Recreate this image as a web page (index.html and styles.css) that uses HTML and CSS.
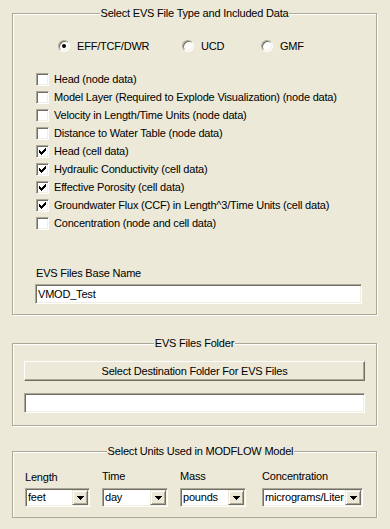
FILE: index.html
```html
<!DOCTYPE html>
<html lang="en">
<head>
    <meta charset="UTF-8">
    <meta name="viewport" content="width=device-width, initial-scale=1.0">
    <title>EVS Export</title>
    <link rel="stylesheet" href="styles.css">
</head>
<body>
    <!-- file type and data -->
    <fieldset class="group group-type">
        <legend>Select EVS File Type and Included Data</legend>
        <div class="radio-row">
            <label class="radio-opt"><span class="radio"><span class="dot"></span></span>EFF/TCF/DWR</label>
            <label class="radio-opt"><span class="radio"></span>UCD</label>
            <label class="radio-opt"><span class="radio"></span>GMF</label>
        </div>
        <ul class="check-list">
            <li><span class="check"></span>Head (node data)</li>
            <li><span class="check"></span>Model Layer (Required to Explode Visualization) (node data)</li>
            <li><span class="check"></span>Velocity in Length/Time Units (node data)</li>
            <li><span class="check"></span>Distance to Water Table (node data)</li>
            <li><span class="check"><svg class="tick" width="7" height="7" viewBox="0 0 7 7"><path d="M0 2h1v3H0zM1 3h1v3H1zM2 4h1v3H2zM3 3h1v3H3zM4 2h1v3H4zM5 1h1v3H5zM6 0h1v3H6z"/></svg></span>Head (cell data)</li>
            <li><span class="check"><svg class="tick" width="7" height="7" viewBox="0 0 7 7"><path d="M0 2h1v3H0zM1 3h1v3H1zM2 4h1v3H2zM3 3h1v3H3zM4 2h1v3H4zM5 1h1v3H5zM6 0h1v3H6z"/></svg></span>Hydraulic Conductivity (cell data)</li>
            <li><span class="check"><svg class="tick" width="7" height="7" viewBox="0 0 7 7"><path d="M0 2h1v3H0zM1 3h1v3H1zM2 4h1v3H2zM3 3h1v3H3zM4 2h1v3H4zM5 1h1v3H5zM6 0h1v3H6z"/></svg></span>Effective Porosity (cell data)</li>
            <li><span class="check"><svg class="tick" width="7" height="7" viewBox="0 0 7 7"><path d="M0 2h1v3H0zM1 3h1v3H1zM2 4h1v3H2zM3 3h1v3H3zM4 2h1v3H4zM5 1h1v3H5zM6 0h1v3H6z"/></svg></span>Groundwater Flux (CCF) in Length^3/Time Units (cell data)</li>
            <li><span class="check"></span>Concentration (node and cell data)</li>
        </ul>
        <div class="field-label">EVS Files Base Name</div>
        <div class="textbox base-name">VMOD_Test</div>
    </fieldset>

    <!-- output folder -->
    <fieldset class="group group-folder">
        <legend>EVS Files Folder</legend>
        <button class="btn">Select Destination Folder For EVS Files</button>
        <div class="textbox folder-path"></div>
    </fieldset>

    <!-- units -->
    <fieldset class="group group-units">
        <legend>Select Units Used in MODFLOW Model</legend>
        <div class="units-row">
            <div class="unit">
                <div class="unit-label low">Length</div>
                <div class="combo w-length"><span class="combo-value">feet</span><span class="combo-drop"><svg width="7" height="4" viewBox="0 0 7 4"><path d="M0 0h7v1H0zM1 1h5v1H1zM2 2h3v1H2zM3 3h1v1H3z"/></svg></span></div>
            </div>
            <div class="unit">
                <div class="unit-label">Time</div>
                <div class="combo w-time"><span class="combo-value">day</span><span class="combo-drop"><svg width="7" height="4" viewBox="0 0 7 4"><path d="M0 0h7v1H0zM1 1h5v1H1zM2 2h3v1H2zM3 3h1v1H3z"/></svg></span></div>
            </div>
            <div class="unit">
                <div class="unit-label">Mass</div>
                <div class="combo w-mass"><span class="combo-value">pounds</span><span class="combo-drop"><svg width="7" height="4" viewBox="0 0 7 4"><path d="M0 0h7v1H0zM1 1h5v1H1zM2 2h3v1H2zM3 3h1v1H3z"/></svg></span></div>
            </div>
            <div class="unit">
                <div class="unit-label">Concentration</div>
                <div class="combo w-conc"><span class="combo-value">micrograms/Liter</span><span class="combo-drop"><svg width="7" height="4" viewBox="0 0 7 4"><path d="M0 0h7v1H0zM1 1h5v1H1zM2 2h3v1H2zM3 3h1v1H3z"/></svg></span></div>
            </div>
        </div>
    </fieldset>
</body>
</html>
```

FILE: styles.css
```css
body {
    margin: 0;
    background-color: #ece9d8;
    font-family: "Liberation Sans", Arial, sans-serif;
    font-size: 11px;
    letter-spacing: -0.2px;
    color: #000;
}

/* group boxes (etched frame) */
.group {
    margin: 0 13px 0 12px;
    padding: 0;
    min-width: 0;
    border: 1px solid #aca899;
    box-shadow: inset 1px 1px #fff, 1px 1px #fff;
}

.group legend {
    margin: 0 auto;
    padding: 0 1px;
    line-height: 14px;
    background-color: #ece9d8;
}

.group-type {
    margin-top: 6px;
    padding-bottom: 10px;
}

.group-folder {
    margin-top: 21px;
    padding: 0 11px 12px;
}

.group-units {
    margin-top: 18px;
    padding: 0 0 10px 12px;
}

/* radio buttons */
.radio-row {
    display: grid;
    grid-template-columns: 124px 79px auto;
    align-items: center;
    height: 18px;
    margin: 17px 0 0 45px;
}

.radio-opt {
    display: flex;
    align-items: center;
    gap: 7px;
}

.radio {
    width: 12px;
    height: 12px;
    box-sizing: border-box;
    border-radius: 50%;
    border: 1px solid;
    border-color: #aca899 #fff #fff #aca899;
    box-shadow: inset 1px 1px #716f64, inset -1px -1px #f1efe2;
    background-color: #fff;
    display: flex;
    justify-content: center;
    align-items: center;
}

.radio .dot {
    width: 4px;
    height: 4px;
    border-radius: 50%;
    background-color: #000;
}

/* checkboxes */
.check-list {
    list-style: none;
    margin: 15px 0 0 23px;
    padding: 0;
}

.check-list li {
    display: flex;
    align-items: center;
    gap: 5px;
    height: 18px;
}

.check {
    flex-shrink: 0;
    width: 13px;
    height: 13px;
    box-sizing: border-box;
    border: 1px solid;
    border-color: #aca899 #fff #fff #aca899;
    box-shadow: inset 1px 1px #716f64, inset -1px -1px #f1efe2;
    background-color: #fff;
    display: flex;
    justify-content: center;
    align-items: center;
}

.tick {
    display: block;
    shape-rendering: crispEdges;
}

/* text fields */
.field-label {
    margin: 34px 0 0 23px;
    line-height: 14px;
}

.textbox {
    height: 20px;
    box-sizing: border-box;
    border: 1px solid;
    border-color: #aca899 #fff #fff #aca899;
    box-shadow: inset 1px 1px #716f64, inset -1px -1px #f1efe2;
    background-color: #fff;
    padding: 0 2px;
    line-height: 18px;
}

.base-name {
    margin: 4px 14px 0 22px;
}

.folder-path {
    margin-top: 12px;
}

.btn {
    display: block;
    width: 100%;
    height: 20px;
    margin-top: 11px;
    padding: 0;
    box-sizing: border-box;
    border: 1px solid;
    border-color: #fff #716f64 #716f64 #fff;
    box-shadow: inset -1px -1px #aca899;
    background-color: #ece9d8;
    font: inherit;
    letter-spacing: inherit;
    color: #000;
    text-align: center;
}

/* unit pickers */
.units-row {
    display: flex;
    margin-top: 11px;
}

.unit-label {
    line-height: 14px;
    margin-bottom: 5px;
}

.unit-label.low {
    position: relative;
    top: 1px;
}

.combo {
    display: flex;
    height: 19px;
    box-sizing: border-box;
    padding: 1px;
    border: 1px solid;
    border-color: #aca899 #fff #fff #aca899;
    box-shadow: inset 1px 1px #716f64, inset -1px -1px #f1efe2;
    background-color: #fff;
}

.combo-value {
    flex: 1;
    min-width: 0;
    padding-left: 1px;
    line-height: 15px;
    white-space: nowrap;
}

.combo-drop {
    flex-shrink: 0;
    width: 16px;
    box-sizing: border-box;
    border: 1px solid;
    border-color: #ece9d8 #716f64 #716f64 #ece9d8;
    box-shadow: inset 1px 1px #fff, inset -1px -1px #aca899;
    background-color: #ece9d8;
    display: flex;
    justify-content: center;
    align-items: center;
}

.combo-drop svg {
    display: block;
    shape-rendering: crispEdges;
}

.w-length {
    width: 65px;
    margin-right: 12px;
}

.w-time {
    width: 66px;
    margin-right: 12px;
}

.w-mass {
    width: 66px;
    margin-right: 16px;
}

.w-conc {
    width: 101px;
}
```
